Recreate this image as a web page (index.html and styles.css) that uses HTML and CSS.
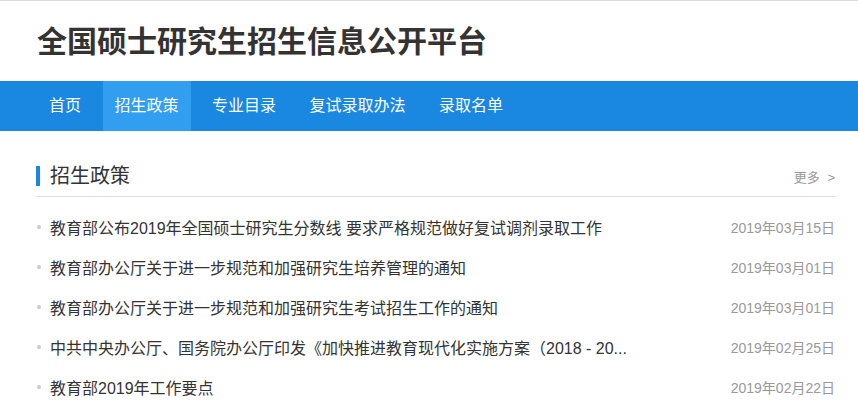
FILE: index.html
```html
<!DOCTYPE html>
<html lang="zh-CN">
  <head>
    <meta charset="UTF-8" />
    <meta name="viewport" content="width=device-width, initial-scale=1.0" />
    <title>全国硕士研究生招生信息公开平台</title>
    <link rel="stylesheet" href="styles.css">
  </head>
  <body>
    <div class="header">
      <div class="inner">
        <h1 class="logo">全国硕士研究生招生信息公开平台</h1>
      </div>
    </div>
    <div class="nav">
      <ul class="inner">
        <li><a href="#">首页</a></li>
        <li class="active"><a href="#">招生政策</a></li>
        <li><a href="#">专业目录</a></li>
        <li><a href="#">复试录取办法</a></li>
        <li><a href="#">录取名单</a></li>
      </ul>
    </div>
    <div class="inner content">
      <div class="section-title">
        <h2>招生政策</h2>
        <a class="more" href="#">更多 &gt;</a>
      </div>
      <ul class="news">
        <li><a href="#">教育部公布2019年全国硕士研究生分数线 要求严格规范做好复试调剂录取工作</a><span class="date">2019年03月15日</span></li>
        <li><a href="#">教育部办公厅关于进一步规范和加强研究生培养管理的通知</a><span class="date">2019年03月01日</span></li>
        <li><a href="#">教育部办公厅关于进一步规范和加强研究生考试招生工作的通知</a><span class="date">2019年03月01日</span></li>
        <li><a href="#">中共中央办公厅、国务院办公厅印发《加快推进教育现代化实施方案（2018 - 20...</a><span class="date">2019年02月25日</span></li>
        <li><a href="#">教育部2019年工作要点</a><span class="date">2019年02月22日</span></li>
      </ul>
    </div>
  </body>
</html>
```

FILE: styles.css
```css
* {
  margin: 0px;
  padding: 0px;
}
body {
  font-family: "Liberation Sans", "Noto Sans CJK SC", sans-serif;
  color: #333;
  background: #fff;
  border-top: 1px solid #ddd;
}
a {
  text-decoration: none;
  color: inherit;
}
ul {
  list-style: none;
}
.inner {
  width: 800px;
  margin-left: 36px;
}

.header {
  height: 80px;
}
.header .inner {
  display: flex;
  align-items: center;
  height: 80px;
  padding-left: 1px;
}
.logo {
  font-size: 30px;
  font-weight: bold;
  line-height: 34px;
  color: #333;
  margin-top: 2px;
}

.nav {
  background-color: #1a88e0;
  height: 50px;
}
.nav ul {
  display: flex;
  height: 50px;
  padding-left: 1px;
}
.nav li {
  margin-right: 9.5px;
}
.nav li a {
  display: block;
  padding: 0px 12px;
  line-height: 50px;
  font-size: 16px;
  color: #fff;
}
.nav li.active a {
  background-color: #319ef0;
}

.content {
  padding-top: 30px;
}
.section-title {
  display: flex;
  justify-content: space-between;
  align-items: center;
  height: 35px;
  border-bottom: 1px solid #ddd;
  margin-bottom: 10px;
}
.section-title h2 {
  font-size: 20px;
  font-weight: normal;
  line-height: 20px;
  border-left: 4px solid #1a88e0;
  padding-left: 10px;
  margin-top: -5px;
}
.more {
  font-size: 13px;
  word-spacing: 4px;
  color: #999;
  margin-right: 1px;
  margin-top: -5px;
}

.news li {
  display: flex;
  justify-content: space-between;
  align-items: center;
  height: 40px;
  font-size: 16px;
  padding-left: 14px;
  position: relative;
}
.news li::before {
  content: "";
  position: absolute;
  left: 1px;
  top: 18px;
  width: 4px;
  height: 4px;
  border-radius: 50%;
  background: #ccc;
}
.news .date {
  font-size: 14px;
  color: #999;
  margin-right: 1px;
}
```
